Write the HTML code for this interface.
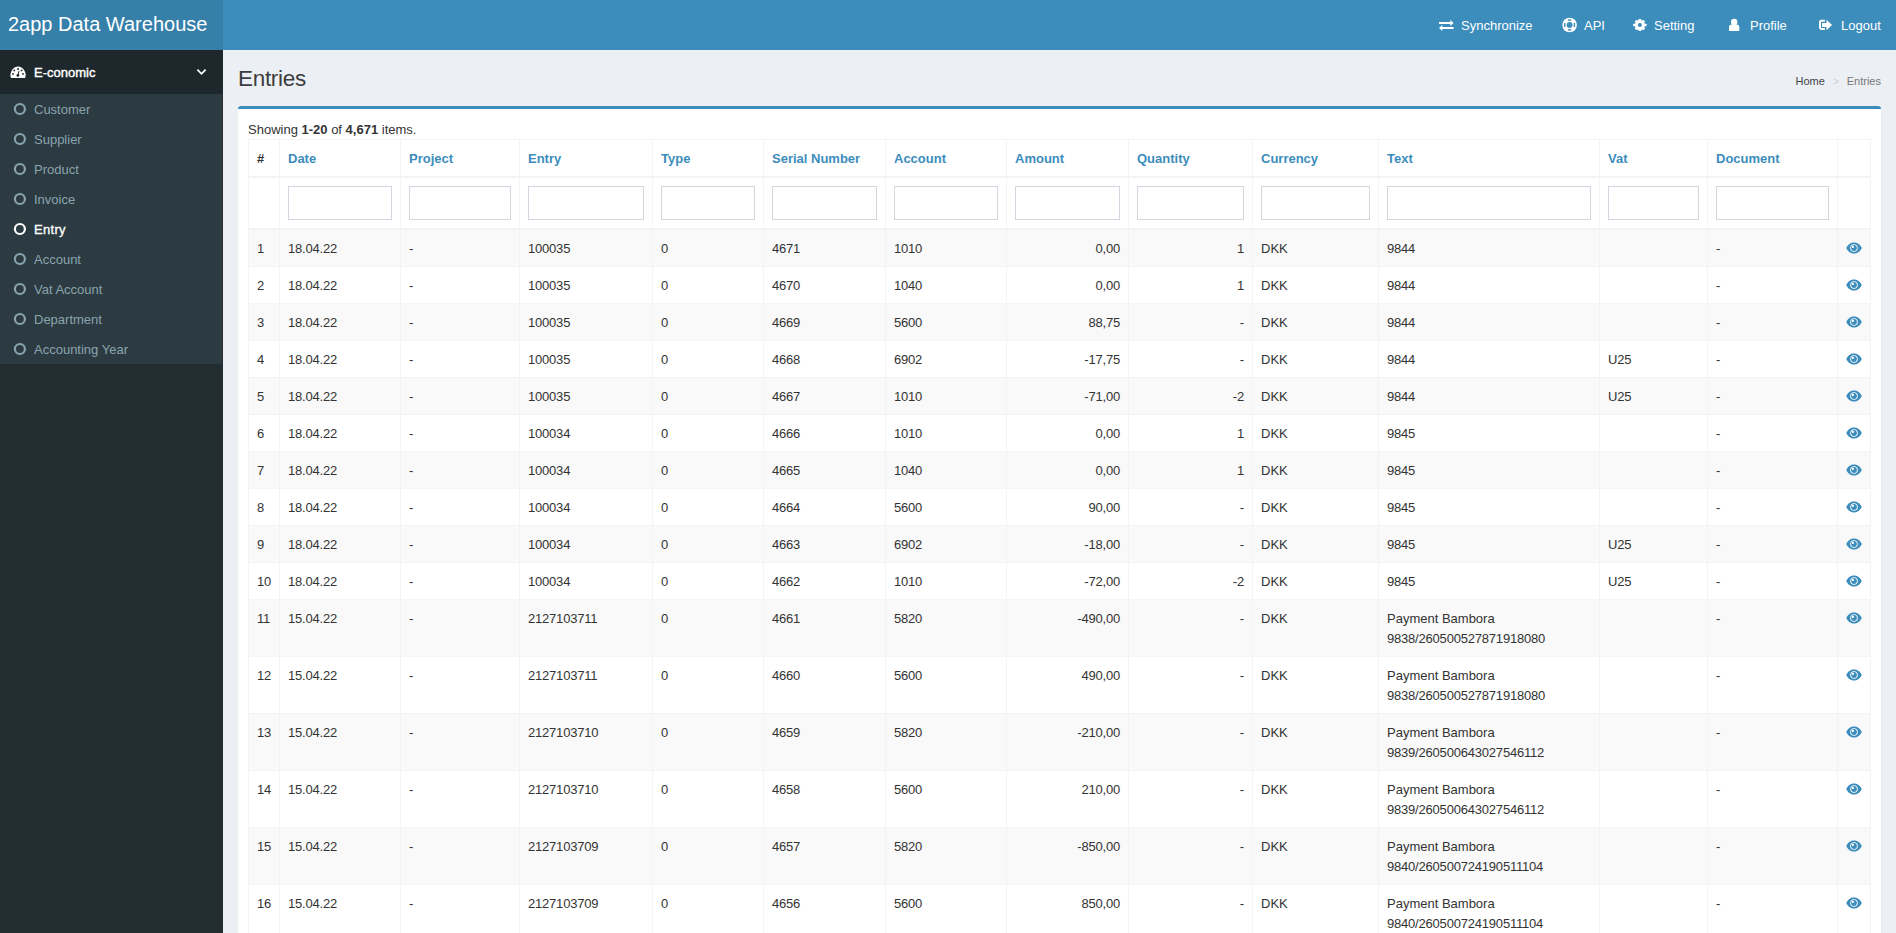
<!DOCTYPE html>
<html><head><meta charset="utf-8"><title>Entries</title>
<style>
*{box-sizing:border-box}
html,body{margin:0;padding:0;width:1896px;height:933px;overflow:hidden;background:#ecf0f5;font-family:"Liberation Sans",sans-serif;color:#333;font-size:13px}
.logo{position:absolute;left:0;top:0;width:223px;height:50px;background:#367fa9;color:#fff;font-size:20px;line-height:49px;padding-left:8px;white-space:nowrap}
.navbar{position:absolute;left:223px;top:0;right:0;height:50px;background:#3c8dbc}
.nav{position:absolute;top:1px;height:50px;color:#fff;font-size:13px;line-height:50px;white-space:nowrap}
.nav svg{position:absolute;top:0}
.side{position:absolute;left:0;top:50px;width:223px;height:883px;background:#222d32}
.side .hdr{position:absolute;left:0;top:0;width:223px;height:44px;background:#1e282c;color:#fff;font-weight:normal;font-size:13px;line-height:46px;-webkit-text-stroke:0.4px #fff}
.side .tm{position:absolute;left:0;top:44px;width:222px;height:270px;background:#2c3b41}
.side .it{position:absolute;left:0;width:223px;height:30px;line-height:32px;color:#8aa4af;font-size:13px}
.side .it.act{color:#fff;-webkit-text-stroke:0.3px #fff;letter-spacing:0.3px}
.side .it span{position:absolute;left:34px;top:0}
.side .it svg{position:absolute;left:13px;top:8px}
h1{position:absolute;left:238px;top:63.5px;margin:0;font-size:22.5px;letter-spacing:-0.3px;font-weight:normal;line-height:30px;color:#3d3d3d}
.bc{position:absolute;right:15px;top:72.5px;font-size:11px;line-height:16px;color:#444;white-space:nowrap}
.bc .sep{color:#ccc;padding:0 8px;font-size:10px}
.bc .cur{color:#777}
.box{position:absolute;left:238px;top:106px;width:1643px;height:900px;background:#fff;border-top:3px solid #3c8dbc;border-radius:3px;box-shadow:0 1px 1px rgba(0,0,0,.1)}
.summary{position:absolute;left:248px;top:120.5px;font-size:13px;line-height:18px;white-space:nowrap}
table{position:absolute;left:248px;top:139px;border-collapse:collapse;table-layout:fixed;width:1622px;font-size:13px}
td,th{border:1px solid #f4f4f4;padding:9px 8px 7px;line-height:20px;vertical-align:top;text-align:left;white-space:nowrap;overflow:hidden}
th{font-weight:bold;color:#3c8dbc;padding:9px 8px 7px}
th.h{color:#333}
thead tr.f td{padding:8px 8px;border-bottom:2px solid #f4f4f4}
thead tr:first-child th{border-bottom:2px solid #f4f4f4}
.inp{display:block;height:34px;border:1px solid #d2d6de;background:#fff;width:100%}
tbody tr:nth-child(odd) td{background:#f9f9f9}
td.r{text-align:right}
.n{letter-spacing:-0.2px}
td.eye{padding:12px 0 0 0;text-align:left;line-height:0}
</style></head><body>
<div class="logo">2app Data Warehouse</div>
<div class="navbar"></div>

<div class="nav" style="left:1461px">Synchronize</div>
<div class="nav" style="left:1584px">API</div>
<div class="nav" style="left:1654px">Setting</div>
<div class="nav" style="left:1750px">Profile</div>
<div class="nav" style="left:1841px">Logout</div>
<svg width="1896" height="50" viewBox="0 0 1896 50" style="position:absolute;left:0;top:0">
<g fill="#fff">
<path d="M1439 22H1450.3V20L1453.6 23 1450.3 26V24H1439Z"/>
<path d="M1453.6 27H1442.3V25L1439 28 1442.3 31V29H1453.6Z"/>
</g>
<circle cx="1569.6" cy="25" r="7.3" fill="#fff"/>
<circle cx="1569.6" cy="25" r="2.9" fill="#3c8dbc"/>
<g fill="#3c8dbc">
<rect x="1567.9" y="19.4" width="3.4" height="1.4"/>
<rect x="1567.9" y="29.2" width="3.4" height="1.4"/>
<rect x="1564.1" y="23" width="1.4" height="4"/>
<rect x="1573.7" y="23" width="1.4" height="4"/>
</g>
<g fill="#fff">
<circle cx="1639.9" cy="25.05" r="5.1"/>
<g transform="translate(1639.9 25.05)">
<rect x="-1.3" y="-6.05" width="2.6" height="12.1" rx="0.4"/>
<rect x="-6.7" y="-1.3" width="13.4" height="2.6" rx="0.4"/>
<rect x="-1.3" y="-6.2" width="2.6" height="12.4" rx="0.4" transform="rotate(45)"/>
<rect x="-1.3" y="-6.2" width="2.6" height="12.4" rx="0.4" transform="rotate(-45)"/>
</g>
</g>
<circle cx="1639.9" cy="25.05" r="2" fill="#3c8dbc"/>
<g fill="#fff">
<circle cx="1734.2" cy="21.9" r="3.2"/>
<path d="M1729 31.1V27.2C1729 25.6 1730.2 24.6 1731.6 24.6H1736.7C1738.1 24.6 1739.3 25.6 1739.3 27.2V31.1Z"/>
</g>
<path d="M1824.9 20.8H1821.3C1820.5 20.8 1820 21.3 1820 22.1V27.6C1820 28.4 1820.5 28.9 1821.3 28.9H1824.9" fill="none" stroke="#fff" stroke-width="2"/>
<path d="M1822 23H1826.5V19.8L1832.1 25 1826.5 30.2V27H1822Z" fill="#fff"/>
</svg>
<div class="side"><div class="hdr">
<svg width="223" height="44" viewBox="0 50 223 44" style="position:absolute;left:0;top:0">
<path d="M11 78.1C10 76 10.2 72 12.4 69.4 14 67.5 16 66.4 18.05 66.4 20.1 66.4 22.1 67.5 23.7 69.4 25.9 72 26.1 76 25.1 78.1Z" fill="#fff"/>
<g fill="#1e282c">
<circle cx="18.1" cy="69" r="0.95"/><circle cx="14.3" cy="70.4" r="0.95"/><circle cx="21.6" cy="70.4" r="0.95"/>
<circle cx="13" cy="73.9" r="0.95"/><circle cx="23" cy="73.9" r="0.95"/><circle cx="17.9" cy="75.4" r="1.4"/>
<path d="M17.3 75.2L18.7 70.8 19.5 71 18.5 75.6Z"/>
</g>
<path d="M197.4 69.7L201.5 73.8 205.6 69.7" fill="none" stroke="#fff" stroke-width="1.7"/>
</svg>
<span style="position:absolute;left:34px;top:0">E-conomic</span>
</div><div class="tm">
<div class="it" style="top:0px"><svg width="14" height="14" viewBox="0 0 14 14"><circle cx="6.9" cy="7" r="5" fill="none" stroke="#8aa4af" stroke-width="2.2"/></svg><span>Customer</span></div>
<div class="it" style="top:30px"><svg width="14" height="14" viewBox="0 0 14 14"><circle cx="6.9" cy="7" r="5" fill="none" stroke="#8aa4af" stroke-width="2.2"/></svg><span>Supplier</span></div>
<div class="it" style="top:60px"><svg width="14" height="14" viewBox="0 0 14 14"><circle cx="6.9" cy="7" r="5" fill="none" stroke="#8aa4af" stroke-width="2.2"/></svg><span>Product</span></div>
<div class="it" style="top:90px"><svg width="14" height="14" viewBox="0 0 14 14"><circle cx="6.9" cy="7" r="5" fill="none" stroke="#8aa4af" stroke-width="2.2"/></svg><span>Invoice</span></div>
<div class="it act" style="top:120px"><svg width="14" height="14" viewBox="0 0 14 14"><circle cx="6.9" cy="7" r="5" fill="none" stroke="#fff" stroke-width="2.2"/></svg><span>Entry</span></div>
<div class="it" style="top:150px"><svg width="14" height="14" viewBox="0 0 14 14"><circle cx="6.9" cy="7" r="5" fill="none" stroke="#8aa4af" stroke-width="2.2"/></svg><span>Account</span></div>
<div class="it" style="top:180px"><svg width="14" height="14" viewBox="0 0 14 14"><circle cx="6.9" cy="7" r="5" fill="none" stroke="#8aa4af" stroke-width="2.2"/></svg><span>Vat Account</span></div>
<div class="it" style="top:210px"><svg width="14" height="14" viewBox="0 0 14 14"><circle cx="6.9" cy="7" r="5" fill="none" stroke="#8aa4af" stroke-width="2.2"/></svg><span>Department</span></div>
<div class="it" style="top:240px"><svg width="14" height="14" viewBox="0 0 14 14"><circle cx="6.9" cy="7" r="5" fill="none" stroke="#8aa4af" stroke-width="2.2"/></svg><span>Accounting Year</span></div>
</div></div>
<h1>Entries</h1>
<div class="bc">Home<span class="sep">&gt;</span><span class="cur">Entries</span></div>
<div class="box"></div>
<div class="summary">Showing <b>1-20</b> of <b>4,671</b> items.</div>
<table><colgroup><col style="width:31px"><col style="width:121px"><col style="width:119px"><col style="width:133px"><col style="width:111px"><col style="width:122px"><col style="width:121px"><col style="width:122px"><col style="width:124px"><col style="width:126px"><col style="width:221px"><col style="width:108px"><col style="width:130px"><col style="width:33px"></colgroup><thead><tr><th class="h">#</th><th>Date</th><th>Project</th><th>Entry</th><th>Type</th><th>Serial Number</th><th>Account</th><th>Amount</th><th>Quantity</th><th>Currency</th><th>Text</th><th>Vat</th><th>Document</th><th></th></tr><tr class="f"><td></td><td><div class="inp"></div></td><td><div class="inp"></div></td><td><div class="inp"></div></td><td><div class="inp"></div></td><td><div class="inp"></div></td><td><div class="inp"></div></td><td><div class="inp"></div></td><td><div class="inp"></div></td><td><div class="inp"></div></td><td><div class="inp"></div></td><td><div class="inp"></div></td><td><div class="inp"></div></td><td></td></tr></thead><tbody><tr><td>1</td><td class="n">18.04.22</td><td>-</td><td class="n">100035</td><td>0</td><td class="n">4671</td><td class="n">1010</td><td class="r n">0,00</td><td class="r n">1</td><td>DKK</td><td><span class="n">9844</span></td><td></td><td>-</td><td class="eye"><svg width="16" height="12" viewBox="0 0 16 12" style="margin-left:8px"><path d="M0.2 6C2.5 1.7 5.3 0.5 8 0.5S13.5 1.7 15.8 6C13.5 10.3 10.7 11.5 8 11.5S2.5 10.3 0.2 6Z" fill="#3c8dbc"/><circle cx="8" cy="6" r="3.8" fill="#fff"/><circle cx="8" cy="6" r="2.9" fill="#3c8dbc"/><circle cx="6.9" cy="4.9" r="1.1" fill="#fff"/></svg></td></tr><tr><td>2</td><td class="n">18.04.22</td><td>-</td><td class="n">100035</td><td>0</td><td class="n">4670</td><td class="n">1040</td><td class="r n">0,00</td><td class="r n">1</td><td>DKK</td><td><span class="n">9844</span></td><td></td><td>-</td><td class="eye"><svg width="16" height="12" viewBox="0 0 16 12" style="margin-left:8px"><path d="M0.2 6C2.5 1.7 5.3 0.5 8 0.5S13.5 1.7 15.8 6C13.5 10.3 10.7 11.5 8 11.5S2.5 10.3 0.2 6Z" fill="#3c8dbc"/><circle cx="8" cy="6" r="3.8" fill="#fff"/><circle cx="8" cy="6" r="2.9" fill="#3c8dbc"/><circle cx="6.9" cy="4.9" r="1.1" fill="#fff"/></svg></td></tr><tr><td>3</td><td class="n">18.04.22</td><td>-</td><td class="n">100035</td><td>0</td><td class="n">4669</td><td class="n">5600</td><td class="r n">88,75</td><td class="r n">-</td><td>DKK</td><td><span class="n">9844</span></td><td></td><td>-</td><td class="eye"><svg width="16" height="12" viewBox="0 0 16 12" style="margin-left:8px"><path d="M0.2 6C2.5 1.7 5.3 0.5 8 0.5S13.5 1.7 15.8 6C13.5 10.3 10.7 11.5 8 11.5S2.5 10.3 0.2 6Z" fill="#3c8dbc"/><circle cx="8" cy="6" r="3.8" fill="#fff"/><circle cx="8" cy="6" r="2.9" fill="#3c8dbc"/><circle cx="6.9" cy="4.9" r="1.1" fill="#fff"/></svg></td></tr><tr><td>4</td><td class="n">18.04.22</td><td>-</td><td class="n">100035</td><td>0</td><td class="n">4668</td><td class="n">6902</td><td class="r n">-17,75</td><td class="r n">-</td><td>DKK</td><td><span class="n">9844</span></td><td class="n">U25</td><td>-</td><td class="eye"><svg width="16" height="12" viewBox="0 0 16 12" style="margin-left:8px"><path d="M0.2 6C2.5 1.7 5.3 0.5 8 0.5S13.5 1.7 15.8 6C13.5 10.3 10.7 11.5 8 11.5S2.5 10.3 0.2 6Z" fill="#3c8dbc"/><circle cx="8" cy="6" r="3.8" fill="#fff"/><circle cx="8" cy="6" r="2.9" fill="#3c8dbc"/><circle cx="6.9" cy="4.9" r="1.1" fill="#fff"/></svg></td></tr><tr><td>5</td><td class="n">18.04.22</td><td>-</td><td class="n">100035</td><td>0</td><td class="n">4667</td><td class="n">1010</td><td class="r n">-71,00</td><td class="r n">-2</td><td>DKK</td><td><span class="n">9844</span></td><td class="n">U25</td><td>-</td><td class="eye"><svg width="16" height="12" viewBox="0 0 16 12" style="margin-left:8px"><path d="M0.2 6C2.5 1.7 5.3 0.5 8 0.5S13.5 1.7 15.8 6C13.5 10.3 10.7 11.5 8 11.5S2.5 10.3 0.2 6Z" fill="#3c8dbc"/><circle cx="8" cy="6" r="3.8" fill="#fff"/><circle cx="8" cy="6" r="2.9" fill="#3c8dbc"/><circle cx="6.9" cy="4.9" r="1.1" fill="#fff"/></svg></td></tr><tr><td>6</td><td class="n">18.04.22</td><td>-</td><td class="n">100034</td><td>0</td><td class="n">4666</td><td class="n">1010</td><td class="r n">0,00</td><td class="r n">1</td><td>DKK</td><td><span class="n">9845</span></td><td></td><td>-</td><td class="eye"><svg width="16" height="12" viewBox="0 0 16 12" style="margin-left:8px"><path d="M0.2 6C2.5 1.7 5.3 0.5 8 0.5S13.5 1.7 15.8 6C13.5 10.3 10.7 11.5 8 11.5S2.5 10.3 0.2 6Z" fill="#3c8dbc"/><circle cx="8" cy="6" r="3.8" fill="#fff"/><circle cx="8" cy="6" r="2.9" fill="#3c8dbc"/><circle cx="6.9" cy="4.9" r="1.1" fill="#fff"/></svg></td></tr><tr><td>7</td><td class="n">18.04.22</td><td>-</td><td class="n">100034</td><td>0</td><td class="n">4665</td><td class="n">1040</td><td class="r n">0,00</td><td class="r n">1</td><td>DKK</td><td><span class="n">9845</span></td><td></td><td>-</td><td class="eye"><svg width="16" height="12" viewBox="0 0 16 12" style="margin-left:8px"><path d="M0.2 6C2.5 1.7 5.3 0.5 8 0.5S13.5 1.7 15.8 6C13.5 10.3 10.7 11.5 8 11.5S2.5 10.3 0.2 6Z" fill="#3c8dbc"/><circle cx="8" cy="6" r="3.8" fill="#fff"/><circle cx="8" cy="6" r="2.9" fill="#3c8dbc"/><circle cx="6.9" cy="4.9" r="1.1" fill="#fff"/></svg></td></tr><tr><td>8</td><td class="n">18.04.22</td><td>-</td><td class="n">100034</td><td>0</td><td class="n">4664</td><td class="n">5600</td><td class="r n">90,00</td><td class="r n">-</td><td>DKK</td><td><span class="n">9845</span></td><td></td><td>-</td><td class="eye"><svg width="16" height="12" viewBox="0 0 16 12" style="margin-left:8px"><path d="M0.2 6C2.5 1.7 5.3 0.5 8 0.5S13.5 1.7 15.8 6C13.5 10.3 10.7 11.5 8 11.5S2.5 10.3 0.2 6Z" fill="#3c8dbc"/><circle cx="8" cy="6" r="3.8" fill="#fff"/><circle cx="8" cy="6" r="2.9" fill="#3c8dbc"/><circle cx="6.9" cy="4.9" r="1.1" fill="#fff"/></svg></td></tr><tr><td>9</td><td class="n">18.04.22</td><td>-</td><td class="n">100034</td><td>0</td><td class="n">4663</td><td class="n">6902</td><td class="r n">-18,00</td><td class="r n">-</td><td>DKK</td><td><span class="n">9845</span></td><td class="n">U25</td><td>-</td><td class="eye"><svg width="16" height="12" viewBox="0 0 16 12" style="margin-left:8px"><path d="M0.2 6C2.5 1.7 5.3 0.5 8 0.5S13.5 1.7 15.8 6C13.5 10.3 10.7 11.5 8 11.5S2.5 10.3 0.2 6Z" fill="#3c8dbc"/><circle cx="8" cy="6" r="3.8" fill="#fff"/><circle cx="8" cy="6" r="2.9" fill="#3c8dbc"/><circle cx="6.9" cy="4.9" r="1.1" fill="#fff"/></svg></td></tr><tr><td class="n">10</td><td class="n">18.04.22</td><td>-</td><td class="n">100034</td><td>0</td><td class="n">4662</td><td class="n">1010</td><td class="r n">-72,00</td><td class="r n">-2</td><td>DKK</td><td><span class="n">9845</span></td><td class="n">U25</td><td>-</td><td class="eye"><svg width="16" height="12" viewBox="0 0 16 12" style="margin-left:8px"><path d="M0.2 6C2.5 1.7 5.3 0.5 8 0.5S13.5 1.7 15.8 6C13.5 10.3 10.7 11.5 8 11.5S2.5 10.3 0.2 6Z" fill="#3c8dbc"/><circle cx="8" cy="6" r="3.8" fill="#fff"/><circle cx="8" cy="6" r="2.9" fill="#3c8dbc"/><circle cx="6.9" cy="4.9" r="1.1" fill="#fff"/></svg></td></tr><tr><td class="n">11</td><td class="n">15.04.22</td><td>-</td><td class="n">2127103711</td><td>0</td><td class="n">4661</td><td class="n">5820</td><td class="r n">-490,00</td><td class="r n">-</td><td>DKK</td><td>Payment Bambora<br><span class="n">9838/260500527871918080</span></td><td></td><td>-</td><td class="eye"><svg width="16" height="12" viewBox="0 0 16 12" style="margin-left:8px"><path d="M0.2 6C2.5 1.7 5.3 0.5 8 0.5S13.5 1.7 15.8 6C13.5 10.3 10.7 11.5 8 11.5S2.5 10.3 0.2 6Z" fill="#3c8dbc"/><circle cx="8" cy="6" r="3.8" fill="#fff"/><circle cx="8" cy="6" r="2.9" fill="#3c8dbc"/><circle cx="6.9" cy="4.9" r="1.1" fill="#fff"/></svg></td></tr><tr><td class="n">12</td><td class="n">15.04.22</td><td>-</td><td class="n">2127103711</td><td>0</td><td class="n">4660</td><td class="n">5600</td><td class="r n">490,00</td><td class="r n">-</td><td>DKK</td><td>Payment Bambora<br><span class="n">9838/260500527871918080</span></td><td></td><td>-</td><td class="eye"><svg width="16" height="12" viewBox="0 0 16 12" style="margin-left:8px"><path d="M0.2 6C2.5 1.7 5.3 0.5 8 0.5S13.5 1.7 15.8 6C13.5 10.3 10.7 11.5 8 11.5S2.5 10.3 0.2 6Z" fill="#3c8dbc"/><circle cx="8" cy="6" r="3.8" fill="#fff"/><circle cx="8" cy="6" r="2.9" fill="#3c8dbc"/><circle cx="6.9" cy="4.9" r="1.1" fill="#fff"/></svg></td></tr><tr><td class="n">13</td><td class="n">15.04.22</td><td>-</td><td class="n">2127103710</td><td>0</td><td class="n">4659</td><td class="n">5820</td><td class="r n">-210,00</td><td class="r n">-</td><td>DKK</td><td>Payment Bambora<br><span class="n">9839/260500643027546112</span></td><td></td><td>-</td><td class="eye"><svg width="16" height="12" viewBox="0 0 16 12" style="margin-left:8px"><path d="M0.2 6C2.5 1.7 5.3 0.5 8 0.5S13.5 1.7 15.8 6C13.5 10.3 10.7 11.5 8 11.5S2.5 10.3 0.2 6Z" fill="#3c8dbc"/><circle cx="8" cy="6" r="3.8" fill="#fff"/><circle cx="8" cy="6" r="2.9" fill="#3c8dbc"/><circle cx="6.9" cy="4.9" r="1.1" fill="#fff"/></svg></td></tr><tr><td class="n">14</td><td class="n">15.04.22</td><td>-</td><td class="n">2127103710</td><td>0</td><td class="n">4658</td><td class="n">5600</td><td class="r n">210,00</td><td class="r n">-</td><td>DKK</td><td>Payment Bambora<br><span class="n">9839/260500643027546112</span></td><td></td><td>-</td><td class="eye"><svg width="16" height="12" viewBox="0 0 16 12" style="margin-left:8px"><path d="M0.2 6C2.5 1.7 5.3 0.5 8 0.5S13.5 1.7 15.8 6C13.5 10.3 10.7 11.5 8 11.5S2.5 10.3 0.2 6Z" fill="#3c8dbc"/><circle cx="8" cy="6" r="3.8" fill="#fff"/><circle cx="8" cy="6" r="2.9" fill="#3c8dbc"/><circle cx="6.9" cy="4.9" r="1.1" fill="#fff"/></svg></td></tr><tr><td class="n">15</td><td class="n">15.04.22</td><td>-</td><td class="n">2127103709</td><td>0</td><td class="n">4657</td><td class="n">5820</td><td class="r n">-850,00</td><td class="r n">-</td><td>DKK</td><td>Payment Bambora<br><span class="n">9840/260500724190511104</span></td><td></td><td>-</td><td class="eye"><svg width="16" height="12" viewBox="0 0 16 12" style="margin-left:8px"><path d="M0.2 6C2.5 1.7 5.3 0.5 8 0.5S13.5 1.7 15.8 6C13.5 10.3 10.7 11.5 8 11.5S2.5 10.3 0.2 6Z" fill="#3c8dbc"/><circle cx="8" cy="6" r="3.8" fill="#fff"/><circle cx="8" cy="6" r="2.9" fill="#3c8dbc"/><circle cx="6.9" cy="4.9" r="1.1" fill="#fff"/></svg></td></tr><tr><td class="n">16</td><td class="n">15.04.22</td><td>-</td><td class="n">2127103709</td><td>0</td><td class="n">4656</td><td class="n">5600</td><td class="r n">850,00</td><td class="r n">-</td><td>DKK</td><td>Payment Bambora<br><span class="n">9840/260500724190511104</span></td><td></td><td>-</td><td class="eye"><svg width="16" height="12" viewBox="0 0 16 12" style="margin-left:8px"><path d="M0.2 6C2.5 1.7 5.3 0.5 8 0.5S13.5 1.7 15.8 6C13.5 10.3 10.7 11.5 8 11.5S2.5 10.3 0.2 6Z" fill="#3c8dbc"/><circle cx="8" cy="6" r="3.8" fill="#fff"/><circle cx="8" cy="6" r="2.9" fill="#3c8dbc"/><circle cx="6.9" cy="4.9" r="1.1" fill="#fff"/></svg></td></tr><tr><td class="n">17</td><td class="n">15.04.22</td><td>-</td><td class="n">2127103708</td><td>0</td><td class="n">4655</td><td class="n">5820</td><td class="r n">-1.250,00</td><td class="r n">-</td><td>DKK</td><td>Payment Bambora<br><span class="n">9841/260500800000000000</span></td><td></td><td>-</td><td class="eye"><svg width="16" height="12" viewBox="0 0 16 12" style="margin-left:8px"><path d="M0.2 6C2.5 1.7 5.3 0.5 8 0.5S13.5 1.7 15.8 6C13.5 10.3 10.7 11.5 8 11.5S2.5 10.3 0.2 6Z" fill="#3c8dbc"/><circle cx="8" cy="6" r="3.8" fill="#fff"/><circle cx="8" cy="6" r="2.9" fill="#3c8dbc"/><circle cx="6.9" cy="4.9" r="1.1" fill="#fff"/></svg></td></tr></tbody></table>
</body></html>
